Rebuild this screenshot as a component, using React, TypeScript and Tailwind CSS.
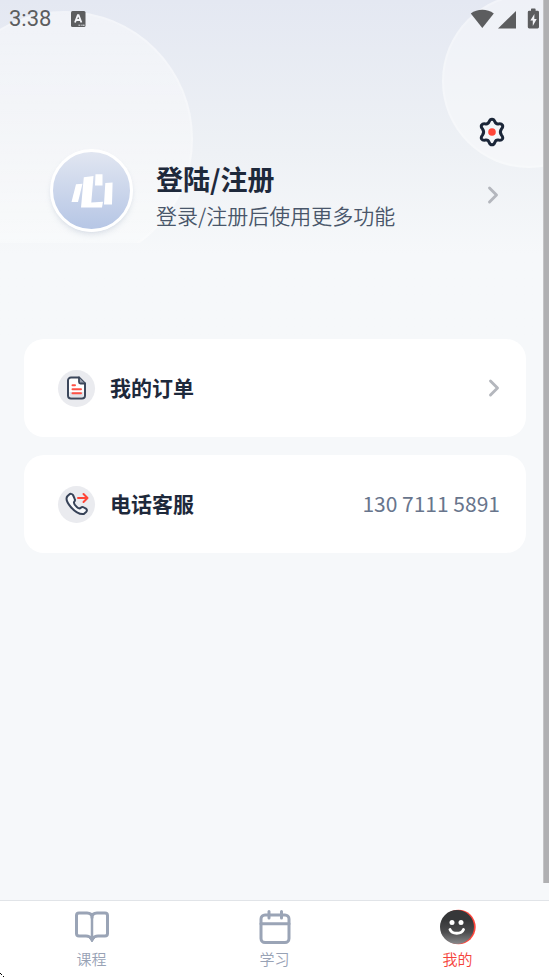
import { ChevronRight } from "lucide-react";

function StatusBar() {
  return (
    <div className="flex h-9 items-center justify-between px-[9px] pt-px text-[#5c5d5f]">
      <div className="flex items-center gap-5">
        <span className="font-[Roboto,sans-serif] text-[22px] leading-9">3:38</span>
        <svg width="15" height="16" viewBox="0 0 15 16" aria-hidden="true">
          <rect width="14.5" height="16" rx="1.5" fill="#5c5d5f" />
          <path d="M4 11.5 6.8 4.2h.8l2.8 7.3M5 9h4.4" fill="none" stroke="#f3f4f8" strokeWidth="1.8" />
          <path d="M7.5 14.2h1.4m.8 0h1m.7 0h2.2" stroke="#f3f4f8" strokeWidth="1" />
        </svg>
      </div>
      <svg width="70" height="21" viewBox="0 0 70 21" fill="#5c5d5f" aria-hidden="true">
        <path d="M.8 5.5C4.1 3 8 1.8 12.3 1.8S20.5 3 23.8 5.5L12.3 20z" />
        <path d="M46 3v17.5H28z" />
        <path d="M61 1.2q0-.7.7-.7h3.2q.7 0 .7.7v1.6h2q1.4 0 1.4 1.4v14.9q0 1.4-1.4 1.4h-8.4q-1.4 0-1.4-1.4V4.2q0-1.4 1.4-1.4H61z" />
        <path d="M64.4 6 60.3 12.5h2.5V18l3.9-6.9h-2.4z" fill="#f3f4f8" />
      </svg>
    </div>
  );
}

function HeaderCircles() {
  return (
    <div className="pointer-events-none absolute inset-x-0 top-0 h-[243px] overflow-hidden">
      <div className="absolute -left-[63px] top-[11px] size-64 rounded-full border-2 border-white/20 bg-linear-to-b from-white/45 to-white/35" />
      <div className="absolute -right-[67px] -top-[6px] size-[174px] rounded-full border-2 border-white/20 bg-white/40" />
    </div>
  );
}

function SettingsIcon() {
  return (
    <svg width="28" height="30" viewBox="0 0 28 30" aria-hidden="true">
      <path
        d="M14 2.2c1.5 0 2.3 1 2.8 2.4.7 1.9 1.9 2.6 3.8 2.3 1.6-.3 3-.1 3.8 1.1.8 1.4.2 2.6-.9 3.9-1.4 1.9-1.4 4.3 0 6.2 1.1 1.3 1.7 2.5.9 3.9-.8 1.2-2.2 1.4-3.8 1.1-1.9-.3-3.1.4-3.8 2.3-.5 1.4-1.3 2.4-2.8 2.4s-2.3-1-2.8-2.4c-.7-1.9-1.9-2.6-3.8-2.3-1.6.3-3 .1-3.8-1.1-.8-1.4-.2-2.6.9-3.9 1.4-1.9 1.4-4.3 0-6.2C3.4 10.6 2.8 9.4 3.6 8c.8-1.2 2.2-1.4 3.8-1.1 1.9.3 3.1-.4 3.8-2.3.5-1.4 1.3-2.4 2.8-2.4z"
        fill="none"
        stroke="#1b2638"
        strokeWidth="3"
        strokeLinejoin="round"
      />
      <circle cx="14" cy="15" r="3.8" fill="#ff4638" />
    </svg>
  );
}

function Avatar() {
  return (
    <span className="flex size-[83px] shrink-0 items-center justify-center rounded-full border-[3px] border-white bg-linear-to-b from-[#e1e6f1] to-[#b6c6e5] shadow-md shadow-slate-400/20">
      <svg width="42" height="36" viewBox="0 0 42 36" fill="#fff" aria-hidden="true">
        <path d="M5 11.3 11.5 10.7 7 29H.5z" />
        <path d="M12.8 4.2 22.5 3 20.3 29.5 32 28.8 31 34.5H10z" />
        <path d="M24.5 1.2h7v11.3H24z" />
        <path d="M34.3 10 41.6 9.5 41 31.5h-8z" />
      </svg>
    </span>
  );
}

function OrderIcon() {
  return (
    <svg width="20" height="24" viewBox="0 0 20 24" fill="none" strokeLinecap="round" strokeLinejoin="round" aria-hidden="true">
      <path d="M4 1.5h8l6 6V19.5a3 3 0 0 1-3 3H4a3 3 0 0 1-3-3v-15a3 3 0 0 1 3-3z" fill="#fff" stroke="#3c475b" strokeWidth="2" />
      <path d="M2.5 16h14v3.5q0 1.5-2 1.5h-10q-2 0-2-1.5z" fill="#dfe2e9" />
      <path d="M12 1.5V6q0 1.5 1.5 1.5H18" fill="#9aa2b0" stroke="#3c475b" strokeWidth="1.8" />
      <path d="M5.5 9.2H8M5.5 13.2H14M5.5 17.2H14" stroke="#ff5145" strokeWidth="2" />
    </svg>
  );
}

function PhoneIcon() {
  return (
    <svg width="24" height="24" viewBox="0 0 24 24" fill="none" strokeLinecap="round" strokeLinejoin="round" aria-hidden="true">
      <path
        d="M4 2.7 2.6 4C.8 6 1.5 10 5.8 15s9.5 7.5 13 7l2.3-2c1.2-1.2 1-2.5-.2-3.3l-2-1.2c-1.3-.8-2.2-.5-3.1.3-1 1-2.2.8-4-.9-1.9-1.7-3.6-3.8-2.5-5.2.8-.9 1-1.8.3-3L8 3C7 1.6 5.3 1.5 4 2.7z"
        fill="#f8f9fb"
        stroke="#364257"
        strokeWidth="2"
      />
      <path d="M13 6h9.5M18.5 2l4 4-4 4" stroke="#ff4638" strokeWidth="2" />
    </svg>
  );
}

function TabItem({ label, active, children }: { label: string; active?: boolean; children: React.ReactNode }) {
  return (
    <a
      href="#"
      aria-current={active ? "page" : undefined}
      className={`flex flex-1 flex-col items-center pt-2 text-[15px] leading-5 ${active ? "text-[#f5423a]" : "text-[#98a2b5]"}`}
    >
      <span className="mb-1 flex h-9 items-center">{children}</span>
      {label}
    </a>
  );
}

function TabBar() {
  return (
    <nav className="flex h-[77px] border-t border-[#e1e4e8] bg-white font-[350]">
      <TabItem label="课程">
        <svg width="36" height="34" viewBox="0 0 36 34" fill="none" stroke="#9aa4b6" strokeWidth="3" strokeLinejoin="round" aria-hidden="true">
          <path d="M18 7.5c0-2.8-2-4.5-5-4.5H5Q2.5 3 2.5 5.5v18Q2.5 26 5 26h7c3 0 4.5 1 6 3 1.5-2 3-3 6-3h7q2.5 0 2.5-2.5v-18Q33.5 3 31 3h-8c-3 0-5 1.7-5 4.5z" />
          <path d="M18 7v22" strokeWidth="2.5" />
          <path d="m15.5 28 2.500 4 2.500-4z" fill="#9aa4b6" strokeWidth="1" />
        </svg>
      </TabItem>
      <TabItem label="学习">
        <svg width="32" height="34" viewBox="0 0 32 34" fill="none" stroke="#9aa4b6" strokeWidth="3" strokeLinecap="round" aria-hidden="true">
          <rect x="2" y="5" width="28" height="27.5" rx="4" />
          <path d="M2 13.8h28M10 1.5V8M22.5 1.5V8" />
        </svg>
      </TabItem>
      <TabItem label="我的" active>
        <svg width="36" height="36" viewBox="0 0 36 36" aria-hidden="true">
          <defs>
            <linearGradient id="face" x1="0" y1="0" x2="0" y2="1">
              <stop offset="0.3" stopColor="#363739" />
              <stop offset="0.65" stopColor="#4c4c4e" />
              <stop offset="1" stopColor="#88888a" />
            </linearGradient>
          </defs>
          <circle cx="18.5" cy="18" r="17.2" fill="#ff443a" />
          <circle cx="17" cy="18" r="17" fill="url(#face)" />
          <circle cx="12" cy="13.5" r="2.5" fill="#fff" />
          <circle cx="21" cy="13.5" r="2.5" fill="#fff" />
          <path d="M10 20.500c2 5 11.500 5 13.500 0" fill="none" stroke="#fff" strokeWidth="2.9" strokeLinecap="round" />
        </svg>
      </TabItem>
    </nav>
  );
}

export default function App() {
  return (
    <div className="relative flex min-h-screen flex-col bg-[#f6f8fa] font-['Noto_Sans_CJK_SC',sans-serif] text-[#1e293b]">
      <header className="relative h-[339px] bg-linear-to-b from-[#e4e8f2] via-[#eef1f5] via-45% to-[#f6f8fa] to-75%">
        <HeaderCircles />
        <div className="relative">
          <StatusBar />
          <div className="flex justify-end pr-[43px] pt-[81px]">
            <button type="button" aria-label="设置">
              <SettingsIcon />
            </button>
          </div>
          <button type="button" className="mt-[2px] flex w-full items-center px-[50px] text-left">
            <Avatar />
            <span className="ml-[23px] flex-1 pt-[10px]">
              <span className="block text-[27px] font-bold leading-[38px]">登陆/注册</span>
              <span className="block text-[21px] font-[350] leading-[34px] text-[#49566a]">登录/注册后使用更多功能</span>
            </span>
            <ChevronRight strokeWidth={2.5} className="mt-2 -mr-2 size-7 text-[#b4b7bd]" />
          </button>
        </div>
      </header>

      <main className="flex flex-1 flex-col gap-[18px] pl-6 pr-[23px]">
        <button type="button" className="flex h-[98px] items-center rounded-[20px] bg-white pl-[34px] pr-[26px] text-left">
          <span className="flex size-[37px] items-center justify-center rounded-full bg-[#eaebef]">
            <OrderIcon />
          </span>
          <span className="ml-[15px] flex-1 text-[21px] font-bold">我的订单</span>
          <ChevronRight strokeWidth={2.5} className="-mr-2 size-7 text-[#b4b7bd]" />
        </button>
        <a href="tel:13071115891" className="flex h-[98px] items-center rounded-[20px] bg-white pl-[34px] pr-[26px]">
          <span className="flex size-[37px] items-center justify-center rounded-full bg-[#eaebef]">
            <PhoneIcon />
          </span>
          <span className="ml-[15px] flex-1 text-[21px] font-bold">电话客服</span>
          <span className="text-[21px] text-[#68758c]">130 7111 5891</span>
        </a>
      </main>

      <TabBar />

      {/* Scroll thumb along the right edge */}
      <div className="absolute bottom-[94px] right-0 top-0 w-[6px] border-l border-[#c4c4c6] bg-[#b0b0b2]" />
      <svg className="absolute bottom-0 left-0" width="5" height="4" viewBox="0 0 5 4" aria-hidden="true">
        <path d="M0 0h1v1H0zM1 1h1v1H1zM3 3h1v1H3z" />
      </svg>
    </div>
  );
}
